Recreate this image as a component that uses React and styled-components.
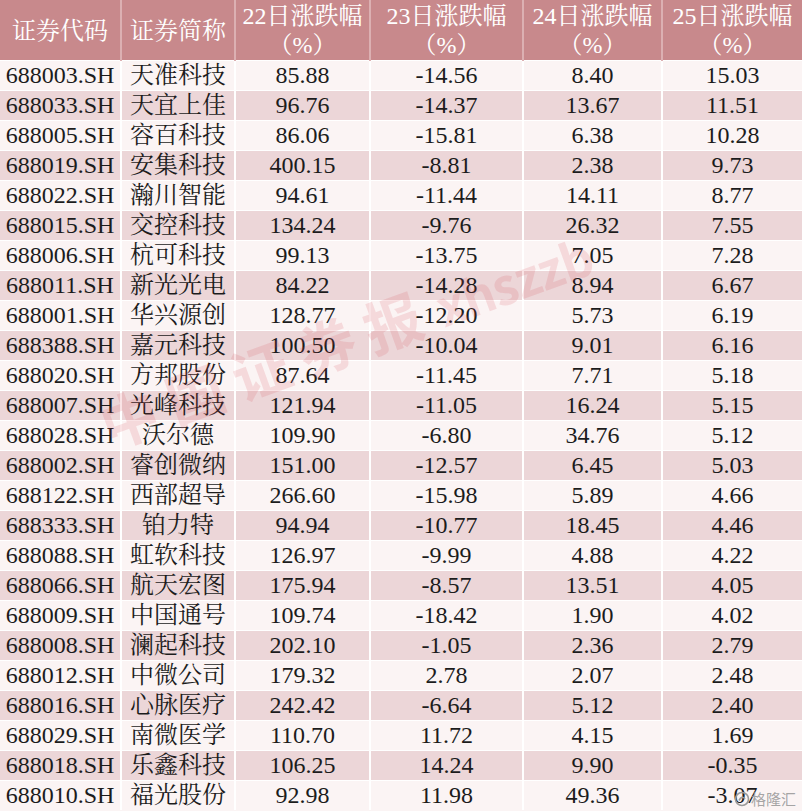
import styled, { createGlobalStyle } from "styled-components";

const rows = [
  ["688003.SH", "天准科技", "85.88", "-14.56", "8.40", "15.03"],
  ["688033.SH", "天宜上佳", "96.76", "-14.37", "13.67", "11.51"],
  ["688005.SH", "容百科技", "86.06", "-15.81", "6.38", "10.28"],
  ["688019.SH", "安集科技", "400.15", "-8.81", "2.38", "9.73"],
  ["688022.SH", "瀚川智能", "94.61", "-11.44", "14.11", "8.77"],
  ["688015.SH", "交控科技", "134.24", "-9.76", "26.32", "7.55"],
  ["688006.SH", "杭可科技", "99.13", "-13.75", "7.05", "7.28"],
  ["688011.SH", "新光光电", "84.22", "-14.28", "8.94", "6.67"],
  ["688001.SH", "华兴源创", "128.77", "-12.20", "5.73", "6.19"],
  ["688388.SH", "嘉元科技", "100.50", "-10.04", "9.01", "6.16"],
  ["688020.SH", "方邦股份", "87.64", "-11.45", "7.71", "5.18"],
  ["688007.SH", "光峰科技", "121.94", "-11.05", "16.24", "5.15"],
  ["688028.SH", "沃尔德", "109.90", "-6.80", "34.76", "5.12"],
  ["688002.SH", "睿创微纳", "151.00", "-12.57", "6.45", "5.03"],
  ["688122.SH", "西部超导", "266.60", "-15.98", "5.89", "4.66"],
  ["688333.SH", "铂力特", "94.94", "-10.77", "18.45", "4.46"],
  ["688088.SH", "虹软科技", "126.97", "-9.99", "4.88", "4.22"],
  ["688066.SH", "航天宏图", "175.94", "-8.57", "13.51", "4.05"],
  ["688009.SH", "中国通号", "109.74", "-18.42", "1.90", "4.02"],
  ["688008.SH", "澜起科技", "202.10", "-1.05", "2.36", "2.79"],
  ["688012.SH", "中微公司", "179.32", "2.78", "2.07", "2.48"],
  ["688016.SH", "心脉医疗", "242.42", "-6.64", "5.12", "2.40"],
  ["688029.SH", "南微医学", "110.70", "11.72", "4.15", "1.69"],
  ["688018.SH", "乐鑫科技", "106.25", "14.24", "9.90", "-0.35"],
  ["688010.SH", "福光股份", "92.98", "11.98", "49.36", "-3.07"],
];

const widths = [121, 114, 135, 153, 139, 140];

const GlobalStyle = createGlobalStyle`
  body {
    margin: 0;
    background: #fff;
  }
`;

const Page = styled.div`
  position: relative;
  width: 802px;
  height: 811px;
  overflow: hidden;
  background: #fbf4f4;
`;

const Table = styled.table`
  width: 802px;
  border-collapse: collapse;
  table-layout: fixed;
  font-family: "Liberation Serif", "Noto Serif CJK SC", "Noto Sans CJK SC", serif;
  font-size: 24px;
  color: #1c1c1c;
`;

const HeadCell = styled.th`
  height: 59px;
  box-sizing: border-box;
  padding: 2px 0 0;
  background: #c8898c;
  color: #fff;
  font-weight: 400;
  line-height: 29px;
  text-align: center;
  vertical-align: middle;
  border-left: 2px solid #dcb0b2;
  border-bottom: 1px solid #fff;
  &:first-child {
    border-left: none;
  }
`;

const Row = styled.tr`
  background: ${(p) => (p.$shade ? "#ecd6d8" : "#fbf4f4")};
`;

const Cell = styled.td`
  height: 29px;
  padding: 0;
  line-height: 29px;
  text-align: center;
  white-space: nowrap;
  border-left: 2px solid #fff;
  border-top: 1px solid #fff;
  &:first-child {
    border-left: none;
  }
`;

const Watermark = styled.div`
  position: absolute;
  left: 102px;
  top: 386px;
  display: flex;
  align-items: baseline;
  gap: 6px;
  transform: rotate(-20deg);
  transform-origin: left center;
  font-family: "Noto Sans CJK SC", sans-serif;
  font-weight: 700;
  line-height: 80px;
  color: rgba(214, 70, 78, 0.15);
  white-space: nowrap;
  pointer-events: none;
`;

const MarkName = styled.span`
  font-size: 58px;
  letter-spacing: 12px;
`;

const MarkId = styled.span`
  font-size: 50px;
  letter-spacing: -1px;
`;

const Brand = styled.div`
  position: absolute;
  right: 6px;
  bottom: 2px;
  display: flex;
  align-items: center;
  gap: 1px;
  font-family: "Noto Sans CJK SC", sans-serif;
  font-size: 15px;
  color: rgba(150, 150, 150, 0.85);
`;

const headers = [
  ["证券代码"],
  ["证券简称"],
  ["22日涨跌幅", "（%）"],
  ["23日涨跌幅", "（%）"],
  ["24日涨跌幅", "（%）"],
  ["25日涨跌幅", "（%）"],
];

export default function App() {
  return (
    <Page>
      <GlobalStyle />
      <Table>
        <colgroup>
          {widths.map((w, i) => (
            <col key={i} style={{ width: w }} />
          ))}
        </colgroup>
        <thead>
          <tr>
            {headers.map((lines, i) => (
              <HeadCell key={i}>
                {lines.map((l, j) => (
                  <div key={j}>{l}</div>
                ))}
              </HeadCell>
            ))}
          </tr>
        </thead>
        <tbody>
          {rows.map((r, i) => (
            <Row key={r[0]} $shade={i % 2 === 1}>
              {r.map((v, j) => (
                <Cell key={j}>{v}</Cell>
              ))}
            </Row>
          ))}
        </tbody>
      </Table>
      <Watermark>
        <MarkName>中国证券报</MarkName>
        <MarkId>xhszzb</MarkId>
      </Watermark>
      <Brand>
        <svg width="16" height="16" viewBox="0 0 16 16">
          <circle cx="8" cy="8" r="6.5" fill="none" stroke="#9a9a9a" strokeWidth="1.6" />
          <path d="M5 9.5 Q8 4 11 8" fill="none" stroke="#9a9a9a" strokeWidth="1.6" />
        </svg>
        <span>格隆汇</span>
      </Brand>
    </Page>
  );
}
